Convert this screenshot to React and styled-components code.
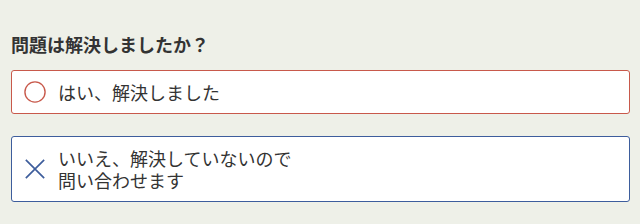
import React from "react";
import styled, { createGlobalStyle } from "styled-components";

const GlobalStyle = createGlobalStyle`
  html, body {
    margin: 0;
    background: #eef0e8;
  }
  body {
    font-family: "Noto Sans CJK JP", "Noto Sans", sans-serif;
    color: #333;
  }
`;

const colors = {
  yes: "#c8594b",
  no: "#3d5d9c",
};

const Wrapper = styled.div`
  padding: 32px 10px 0 11px;
`;

const Question = styled.h2`
  margin: 0 0 14px;
  font-size: 18px;
  line-height: 24px;
  font-weight: 700;
  color: #333;
`;

const Options = styled.div`
  display: flex;
  flex-direction: column;
  gap: 22px;
`;

const Option = styled.button`
  display: flex;
  align-items: center;
  gap: 12px;
  width: 100%;
  padding: 10px 12px;
  background: #fff;
  border: 1px solid ${(p) => colors[p.$kind]};
  border-radius: 3px;
  font-family: inherit;
  text-align: left;
  cursor: pointer;
`;

const Icon = styled.svg`
  flex: none;
  width: 22px;
  height: 22px;
`;

const Label = styled.span`
  font-size: 18px;
  line-height: 22px;
  color: #333;
`;

const CircleIcon = () => (
  <Icon viewBox="0 0 24 24">
    <circle cx="12" cy="12" r="11" fill="none" stroke={colors.yes} strokeWidth="1.5" />
  </Icon>
);

const CrossIcon = () => (
  <Icon viewBox="0 0 24 24">
    <path d="M2 2 L22 22 M22 2 L2 22" fill="none" stroke={colors.no} strokeWidth="1.8" />
  </Icon>
);

export default function App() {
  return (
    <Wrapper>
      <GlobalStyle />
      <Question>問題は解決しましたか？</Question>
      <Options>
        <Option $kind="yes">
          <CircleIcon />
          <Label>はい、解決しました</Label>
        </Option>
        <Option $kind="no">
          <CrossIcon />
          <Label>
            いいえ、解決していないので
            <br />
            問い合わせます
          </Label>
        </Option>
      </Options>
    </Wrapper>
  );
}
